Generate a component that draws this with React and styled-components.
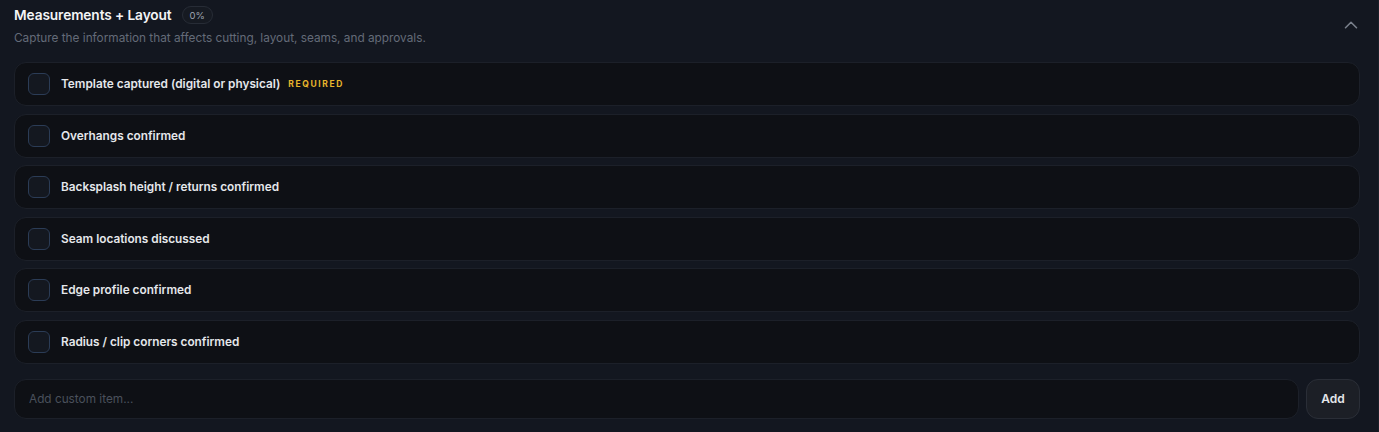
import React from "react";
import styled, { createGlobalStyle } from "styled-components";
import { ChevronUp } from "lucide-react";

const Global = createGlobalStyle`
  html, body { margin: 0; padding: 0; background: #131720; }
  body { font-family: "Segoe UI", Inter, "Noto Sans", sans-serif; -webkit-font-smoothing: antialiased; }
  * { box-sizing: border-box; }
`;

const Section = styled.section`
  width: 1379px;
  height: 432px;
  background: #131720;
  border-right: 1px solid #1a1f28;
  padding: 4px 18px 0 14px;
  display: flex;
  flex-direction: column;
`;

const Header = styled.header`
  display: flex;
  align-items: flex-start;
  justify-content: space-between;
`;

const TitleBlock = styled.div`
  display: flex;
  flex-direction: column;
  gap: 5px;
`;

const TitleRow = styled.div`
  display: flex;
  align-items: center;
  gap: 10px;
  height: 22px;
`;

const Title = styled.h2`
  margin: 0;
  font-size: 13.7px;
  font-weight: 600;
  color: #f3f4f6;
  letter-spacing: -0.1px;
`;

const Badge = styled.span`
  display: inline-flex;
  align-items: center;
  height: 18px;
  padding: 0 7px;
  border-radius: 999px;
  border: 1px solid #272c36;
  background: #161a22;
  color: #9ca3af;
  font-size: 9.5px;
`;

const Subtitle = styled.p`
  margin: 0;
  font-size: 11.8px;
  color: #646b78;
`;

const Toggle = styled.button`
  background: none;
  border: none;
  padding: 0;
  margin-top: 10px;
  margin-right: -2px;
  color: #7a808c;
  display: flex;
  cursor: pointer;
`;

const List = styled.div`
  margin-top: 17px;
  display: flex;
  flex-direction: column;
  gap: 7.6px;
`;

const Row = styled.label`
  height: 44px;
  display: flex;
  align-items: center;
  gap: 11px;
  padding: 0 13px;
  border: 1px solid #1c2029;
  border-radius: 12px;
  background: #0e1015;
  cursor: pointer;
`;

const Box = styled.span`
  width: 22px;
  height: 22px;
  border-radius: 6px;
  border: 1px solid #2b3c56;
  background: #141820;
  flex: none;
`;

const Label = styled.span`
  font-size: 11.8px;
  font-weight: 600;
  color: #e5e7eb;
`;

const Required = styled.span`
  margin-left: -3px;
  font-size: 8.5px;
  font-weight: 700;
  letter-spacing: 1.6px;
  color: #e8b52c;
`;

const AddBar = styled.form`
  margin-top: 15px;
  display: flex;
  gap: 7px;
`;

const Input = styled.input`
  flex: 1;
  height: 40px;
  border-radius: 12px;
  border: 1px solid #1c2029;
  background: #0e1015;
  padding: 0 14px;
  font-family: inherit;
  font-size: 11.8px;
  color: #e5e7eb;
  outline: none;
  &::placeholder { color: #4a505c; }
`;

const AddButton = styled.button`
  width: 54px;
  height: 40px;
  border-radius: 12px;
  border: 1px solid #2a2e37;
  background: #1c1f26;
  color: #e5e7eb;
  font-family: inherit;
  font-size: 12px;
  font-weight: 600;
  cursor: pointer;
`;

const items = [
  { text: "Template captured (digital or physical)", required: true },
  { text: "Overhangs confirmed" },
  { text: "Backsplash height / returns confirmed" },
  { text: "Seam locations discussed" },
  { text: "Edge profile confirmed" },
  { text: "Radius / clip corners confirmed" },
];

export default function App() {
  return (
    <>
      <Global />
      <Section>
        <Header>
          <TitleBlock>
            <TitleRow>
              <Title>Measurements + Layout</Title>
              <Badge>0%</Badge>
            </TitleRow>
            <Subtitle>Capture the information that affects cutting, layout, seams, and approvals.</Subtitle>
          </TitleBlock>
          <Toggle aria-label="Collapse">
            <ChevronUp size={22} strokeWidth={1.7} />
          </Toggle>
        </Header>
        <List>
          {items.map((it) => (
            <Row key={it.text}>
              <Box />
              <Label>{it.text}</Label>
              {it.required && <Required>REQUIRED</Required>}
            </Row>
          ))}
        </List>
        <AddBar onSubmit={(e) => e.preventDefault()}>
          <Input placeholder="Add custom item..." />
          <AddButton type="submit">Add</AddButton>
        </AddBar>
      </Section>
    </>
  );
}
